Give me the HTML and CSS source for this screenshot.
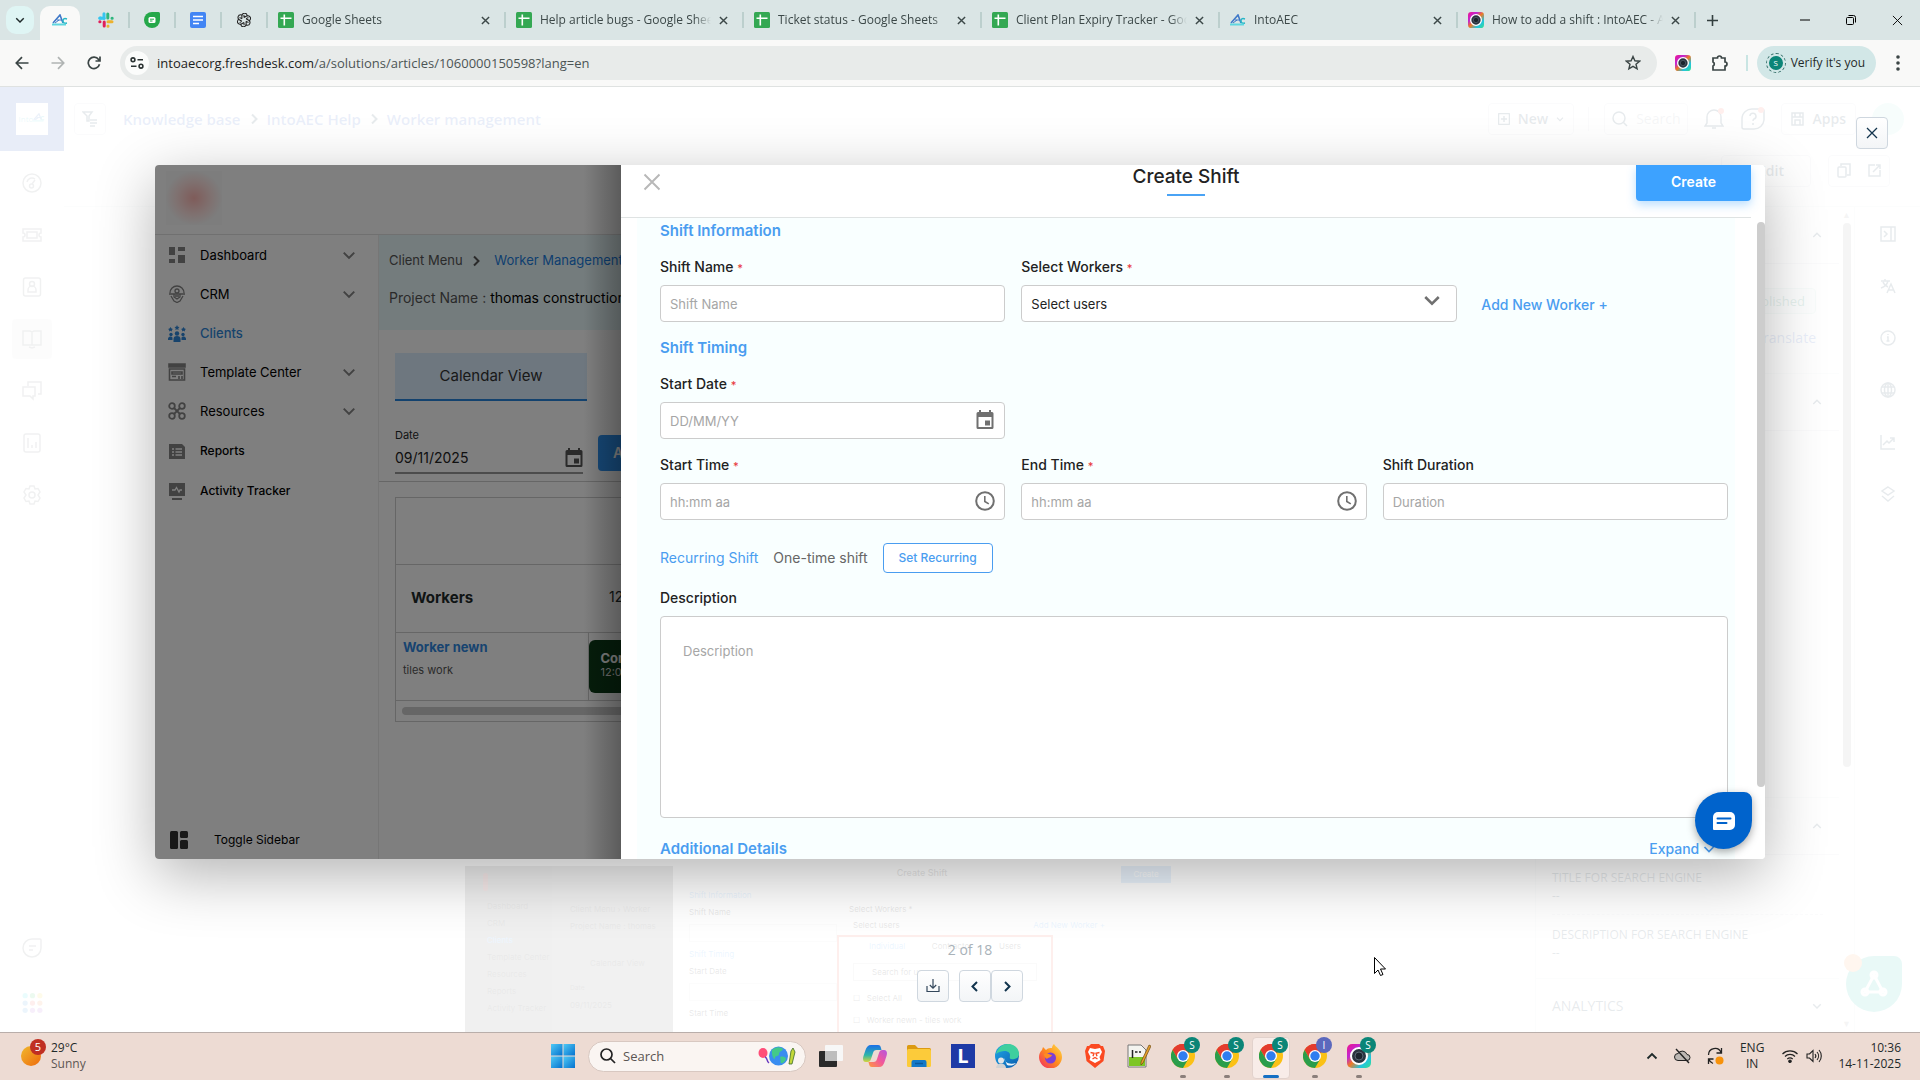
FILE: index.html
```html
<!DOCTYPE html>
<html lang="en">
<head>
<meta charset="utf-8">
<title>IntoAEC Help</title>
<link rel="stylesheet" href="styles.css">
</head>
<body>
<svg class="defs" aria-hidden="true">
  <symbol id="sheets" viewBox="0 0 16 16"><rect width="16" height="16" rx="1.5" fill="#34a853"/><path d="M2.5 6.2h11M6.3 2.5v11" stroke="#fff" stroke-width="1.6"/></symbol>
  <symbol id="x" viewBox="0 0 10 10"><path d="M1 1l8 8M9 1l-8 8" stroke="currentColor" stroke-width="1.6" fill="none"/></symbol>
  <symbol id="xthin" viewBox="0 0 12 12"><path d="M1 1l10 10M11 1L1 11" stroke="currentColor" stroke-width="1.3" fill="none"/></symbol>
  <symbol id="down" viewBox="0 0 12 12"><path d="M1.500 4L6 8.500 10.500 4" stroke="currentColor" stroke-width="1.700" fill="none"/></symbol>
  <symbol id="up" viewBox="0 0 12 12"><path d="M1.500 8.500L6 4l4.500 4.500" stroke="currentColor" stroke-width="1.800" fill="none"/></symbol>
  <symbol id="right" viewBox="0 0 12 12"><path d="M4 1.500L8.500 6 4 10.500" stroke="currentColor" stroke-width="2" fill="none"/></symbol>
  <symbol id="left" viewBox="0 0 12 12"><path d="M8 1.500L3.500 6 8 10.500" stroke="currentColor" stroke-width="2" fill="none"/></symbol>
  <symbol id="aec" viewBox="0 0 16 12"><path d="M1 9L8 1l3 8" fill="none" stroke="#3f78c8" stroke-width="1.600"/><path d="M3 9l4-3M5 6h5" stroke="#3f78c8"/><path d="M15 5c-3-1-4 0-4 2s1 2.500 4 2" fill="none" stroke="#27b6c6" stroke-width="1.500"/><path d="M0 10.500h14" stroke="#5fd6df" stroke-width="2"/></symbol>
  <symbol id="camera" viewBox="0 0 24 24"><rect width="24" height="24" rx="5" fill="url(#rainbow)"/><circle cx="12" cy="12" r="8" fill="#2b3440" stroke="#fff" stroke-width="2"/><circle cx="12" cy="12" r="4" fill="#1c242d" stroke="#5a6673"/></symbol>
  <linearGradient id="rainbow" x1="0" y1="0" x2="1" y2="1"><stop offset="0" stop-color="#f0148c"/><stop offset=".3" stop-color="#c026d3"/><stop offset=".5" stop-color="#ef7a24"/><stop offset=".75" stop-color="#22c4e0"/><stop offset="1" stop-color="#35e08a"/></linearGradient>
  <linearGradient id="win" x1="0" y1="0" x2="1" y2="1"><stop offset="0" stop-color="#4fc9f5"/><stop offset="1" stop-color="#0572cf"/></linearGradient>
  <linearGradient id="edge" x1="0" y1="0" x2="1" y2="1"><stop offset="0" stop-color="#1fa7e8"/><stop offset="1" stop-color="#0b5cae"/></linearGradient>
  <linearGradient id="fox" x1="1" y1="0" x2="0" y2="1"><stop offset="0" stop-color="#ffe04a"/><stop offset=".5" stop-color="#ff8a1e"/><stop offset="1" stop-color="#f0246a"/></linearGradient>
  <linearGradient id="cop1" x1="0" y1="0" x2="0" y2="1"><stop offset="0" stop-color="#1b6fe8"/><stop offset=".6" stop-color="#2fb6a8"/><stop offset="1" stop-color="#d6d43a"/></linearGradient>
  <linearGradient id="cop2" x1="1" y1="0" x2="0" y2="1"><stop offset="0" stop-color="#b455e0"/><stop offset=".5" stop-color="#f2589a"/><stop offset="1" stop-color="#ff9a3c"/></linearGradient>
  <symbol id="chrome" viewBox="0 0 24 24"><circle cx="12" cy="12" r="12" fill="#fbc116"/><path d="M12 12L1.600 6A12 12 0 0 1 22.400 6z" fill="#e33b2e"/><path d="M12 6h10.400A12 12 0 0 0 1.600 6l5.200 9z" fill="#e33b2e"/><path d="M1.600 6A12 12 0 0 0 12 24l5.200-9H6.800z" fill="#2a9d4b"/><circle cx="12" cy="12" r="6" fill="#fff"/><circle cx="12" cy="12" r="4.700" fill="#2f7df0"/></symbol>
  <symbol id="calendar" viewBox="0 0 18 20"><path d="M2 2h14a1.500 1.500 0 0 1 1.500 1.500v14A1.500 1.500 0 0 1 16 19H2a1.500 1.500 0 0 1-1.500-1.500v-14A1.500 1.500 0 0 1 2 2zm.5 5v10h13V7z" fill="currentColor" fill-rule="evenodd"/><path d="M4 0v3M14 0v3" stroke="currentColor" stroke-width="2"/><path d="M9 10.500h5v5H9z" fill="currentColor"/></symbol>
  <symbol id="clock" viewBox="0 0 20 20"><circle cx="10" cy="10" r="8.800" fill="none" stroke="currentColor" stroke-width="2"/><path d="M9.800 5v5.500l4 2.400" fill="none" stroke="currentColor" stroke-width="1.600"/></symbol>
</svg>

<header class="browser">
  <div class="tabstrip">
    <button class="tabsearch" aria-label="Search tabs"><svg width="10" height="10"><use href="#down"/></svg></button>
    <div class="tab-active"><svg width="16" height="12"><use href="#aec"/></svg></div>
    <div class="pin"><svg width="16" height="16" viewBox="0 0 16 16" stroke-width="3" stroke-linecap="round"><path d="M6 1.800v4.400M1.800 6h1" stroke="#36c5f0"/><path d="M2 6.200h4" stroke="#36c5f0"/><path d="M9.800 2v4M14.200 6.200h-.2" stroke="#2eb67d"/><path d="M10 9.800h4M10 14.200v-.2" stroke="#ecb22e"/><path d="M6.200 10v4M1.800 9.800H2" stroke="#e01e5a"/></svg></div>
    <div class="pin"><svg width="16" height="16" viewBox="0 0 16 16"><path d="M8 0h6.500A1.500 1.500 0 0 1 16 1.500V8a8 8 0 1 1-8-8z" fill="#25a84a"/><rect x="4.500" y="5" width="7" height="6" rx="1.500" fill="#fff"/><path d="M6 7.200h4M6 9h2.500" stroke="#25a84a"/></svg></div>
    <div class="pin"><svg width="16" height="16" viewBox="0 0 16 16"><rect width="16" height="16" rx="2" fill="#4285f4"/><path d="M3 4.500h10M3 8h10M3 11.500h6" stroke="#fff" stroke-width="1.600"/></svg></div>
    <div class="pin"><svg width="14" height="14" viewBox="0 0 16 16" fill="none" stroke="#222" stroke-width="1.200"><path id="petal" d="M8 5.200L11 3.500a3 3 0 0 1 4 4.200c-.3.600-.8 1-1.300 1.200M8 5.200v-2a3 3 0 0 0-.2-1"/><use href="#petal" transform="rotate(60 8 8)"/><use href="#petal" transform="rotate(120 8 8)"/><use href="#petal" transform="rotate(180 8 8)"/><use href="#petal" transform="rotate(240 8 8)"/><use href="#petal" transform="rotate(300 8 8)"/></svg></div>
    <div class="tab"><svg width="16" height="16"><use href="#sheets"/></svg><span class="title">Google Sheets</span><svg class="cls" width="9" height="9"><use href="#x"/></svg></div>
    <div class="tab"><svg width="16" height="16"><use href="#sheets"/></svg><span class="title">Help article bugs - Google Sheets</span><svg class="cls" width="9" height="9"><use href="#x"/></svg></div>
    <div class="tab"><svg width="16" height="16"><use href="#sheets"/></svg><span class="title">Ticket status - Google Sheets</span><svg class="cls" width="9" height="9"><use href="#x"/></svg></div>
    <div class="tab"><svg width="16" height="16"><use href="#sheets"/></svg><span class="title">Client Plan Expiry Tracker - Google Sheets</span><svg class="cls" width="9" height="9"><use href="#x"/></svg></div>
    <div class="tab"><svg width="16" height="12"><use href="#aec"/></svg><span class="title">IntoAEC</span><svg class="cls" width="9" height="9"><use href="#x"/></svg></div>
    <div class="tab"><svg width="16" height="16"><use href="#camera"/></svg><span class="title">How to add a shift : IntoAEC - Article</span><svg class="cls" width="9" height="9"><use href="#x"/></svg></div>
    <button class="newtab" aria-label="New tab"><svg width="11" height="11" viewBox="0 0 11 11"><path d="M5.500 0v11M0 5.500h11" stroke="#333f3f" stroke-width="1.600"/></svg></button>
    <div class="wincontrols">
      <button aria-label="Minimise"><svg width="10" height="10" viewBox="0 0 10 10"><path d="M0 5h10" stroke="#000"/></svg></button>
      <button aria-label="Restore"><svg width="10" height="10" viewBox="0 0 10 10" fill="none" stroke="#000"><rect x=".5" y="2.500" width="7" height="7" rx="1"/><path d="M2.500.5h5a2 2 0 0 1 2 2v5"/></svg></button>
      <button aria-label="Close window"><svg width="11" height="11" viewBox="0 0 12 12"><path d="M1 1l10 10M11 1L1 11" stroke="#000"/></svg></button>
    </div>
  </div>
  <div class="toolbar">
    <div class="nav">
      <button aria-label="Back"><svg width="14" height="14" viewBox="0 0 14 14" fill="none" stroke="#3b4545" stroke-width="1.700"><path d="M13.500 7H1.500M7 1.200L1.300 7 7 12.800"/></svg></button>
      <button aria-label="Forward"><svg width="14" height="14" viewBox="0 0 14 14" fill="none" stroke="#b0b4b3" stroke-width="1.700"><path d="M.5 7h12M7 1.200L12.700 7 7 12.800"/></svg></button>
      <button aria-label="Reload"><svg width="14" height="14" viewBox="0 0 14 14" fill="none" stroke="#3b4545" stroke-width="1.700"><path d="M12.500 8.300A5.700 5.700 0 1 1 11.600 3.500L13 5M13 .5V5H8.500"/></svg></button>
    </div>
    <div class="urlbar">
      <span class="site"><svg width="14" height="12" viewBox="0 0 14 12" fill="none" stroke="#2b3333" stroke-width="1.600"><circle cx="3" cy="2.800" r="1.900"/><path d="M7.500 2.800H13M1 9.200h5.500"/><circle cx="11" cy="9.200" r="1.900"/></svg></span>
      <span class="url">intoaecorg.freshdesk.com<i>/a/solutions/articles/1060000150598?lang=en</i></span>
      <svg width="16" height="16" viewBox="0 0 16 16"><path d="M8 1.500l1.900 4.300 4.700.4-3.600 3 1.100 4.600L8 11.300l-4.100 2.500L5 9.200l-3.600-3 4.700-.4z" fill="none" stroke="#3b4545" stroke-width="1.400"/></svg>
    </div>
    <svg width="16" height="16"><use href="#camera"/></svg>
    <svg class="puzzle" width="18" height="18" viewBox="0 0 18 18"><path d="M2 4h4.500a2 2 0 0 1 4 0H14v4a2 2 0 0 1 0 4v4H2v-4a2.200 2.200 0 0 0 0-4z" fill="none" stroke="#3b4545" stroke-width="1.700"/></svg>
    <span class="barsep"></span>
    <button class="verify"><span class="avatar">S</span>Verify it's you</button>
    <svg class="dots" width="4" height="16" viewBox="0 0 4 16" fill="#3b4545"><circle cx="2" cy="2" r="1.800"/><circle cx="2" cy="8" r="1.800"/><circle cx="2" cy="14" r="1.800"/></svg>
  </div>
</header>

<main class="page">
  <div class="app">
    <nav class="rail">
      <div class="brand"><span>Into<svg width="12" height="9"><use href="#aec"/></svg></span></div>
      <div class="railicons">
        <a href="#"><svg viewBox="0 0 20 20"><circle cx="10" cy="10" r="9"/><path d="M5 9a5 5 0 0 1 8-3M10 11l3-4"/><circle cx="9.500" cy="13" r="2"/></svg></a>
        <a href="#"><svg viewBox="0 0 20 20"><path d="M1 4h18v4a2 2 0 0 0 0 4v4H1v-4a2 2 0 0 0 0-4z"/><rect x="5" y="7" width="10" height="6"/></svg></a>
        <a href="#"><svg viewBox="0 0 20 20"><rect x="1.500" y="1" width="17" height="18" rx="2"/><circle cx="10" cy="7" r="2.500"/><path d="M6 15v-2a4 4 0 0 1 8 0v2z"/></svg></a>
        <a href="#" class="on"><svg viewBox="0 0 20 20"><path d="M10 3v13M1 2h7l2 1 2-1h7v14H1zM7 18l3 1 3-1"/></svg></a>
        <a href="#"><svg viewBox="0 0 20 20"><path d="M6 5V1h13v12h-3M1 6h12v9h-2v3l-3-3H1z"/></svg></a>
        <a href="#"><svg viewBox="0 0 20 20"><rect x="2" y="1" width="16" height="18" rx="2"/><path d="M6 5v10M10 12v3M14 9v6"/></svg></a>
        <a href="#"><svg viewBox="0 0 20 20"><path d="M8 1h4l1 3 3-.5 2 3.500-2 3 2 3-2 3.500-3-.5-1 3H8l-1-3-3 .5L2 13l2-3-2-3 2-3.500 3 .5z"/><circle cx="10" cy="10" r="3"/></svg></a>
      </div>
      <div class="railfoot">
        <a href="#"><svg viewBox="0 0 20 20"><path d="M10 1h8a1 1 0 0 1 1 1v8a9 9 0 1 1-9-9zM7 8h7M7 12h4"/></svg></a>
        <a href="#"><svg viewBox="0 0 20 20" stroke="none"><g fill="#2ce0e8"><circle cx="3" cy="3" r="2.500"/></g><circle cx="10" cy="3" r="2.500" fill="#3cc66b"/><circle cx="17" cy="3" r="2.500" fill="#f5d22e"/><circle cx="3" cy="10" r="2.500" fill="#3f9be0"/><circle cx="10" cy="10" r="2.500" fill="#ee5c50"/><circle cx="17" cy="10" r="2.500" fill="#f08040"/><circle cx="3" cy="17" r="2.500" fill="#3f9be0"/><circle cx="10" cy="17" r="2.500" fill="#b060d0"/><circle cx="17" cy="17" r="2.500" fill="#b060d0"/></svg></a>
      </div>
    </nav>
    <div class="appmain">
      <div class="topbar">
        <button class="box filter" aria-label="Filter"><svg width="16" height="16" viewBox="0 0 16 16"><path d="M1 1h9L7 5v5H5V5zM8 9h7M8 12h7M8 15h5"/></svg></button>
        <div class="crumbs"><a href="#">Knowledge base</a><svg width="12" height="12"><use href="#right"/></svg><a href="#">IntoAEC Help</a><svg width="12" height="12"><use href="#right"/></svg><a href="#">Worker management</a></div>
        <button class="box"><svg width="12" height="12" viewBox="0 0 12 12"><rect x=".5" y=".5" width="11" height="11" rx="1"/><path d="M6 3v6M3 6h6"/></svg>New<svg width="8" height="8"><use href="#down"/></svg></button>
        <span class="vline"></span>
        <button class="box search"><svg width="16" height="16" viewBox="0 0 16 16"><circle cx="7" cy="7" r="6"/><path d="M11.500 11.500L15 15"/></svg>Search</button>
        <svg class="bell" width="20" height="22" viewBox="0 0 20 22"><path d="M1 18h18l-2-3V9A7 7 0 0 0 3 9v6zM8 20h4"/><circle cx="17" cy="3" r="3" fill="#ff5a4a" stroke="none"/></svg>
        <svg class="help" width="24" height="24" viewBox="0 0 24 24"><path d="M12 2h9a2 2 0 0 1 2 2v9a10 10 0 0 1-10 9H3a2 2 0 0 1-2-2v-8A10 10 0 0 1 12 2zM9 9a3 3 0 1 1 4 3c-1 .5-1 1-1 2M12 16v2"/><circle cx="20" cy="3" r="3" fill="#ff5a4a" stroke="none"/></svg>
        <button class="box apps"><svg width="13" height="14" viewBox="0 0 13 14"><path d="M1 1h11v4H1zM1 5v8h11V5M4 1v4M9 1v4M4 8h5v5H4z"/></svg>Apps</button>
        <span class="user"></span>
      </div>
      <div class="actions"><button class="box edit">Edit</button><div class="pair"><svg width="14" height="15" viewBox="0 0 14 15"><rect x="1" y="4" width="8" height="10" rx="1"/><path d="M4 3V1h9v11h-3"/></svg><svg width="13" height="13" viewBox="0 0 13 13"><path d="M7 1H1v11h11V6M5 8l7-7M8 1h4v4"/></svg></div></div>
      <div class="appbody">
        <div class="article">
          <div class="shot">
            <div class="shotside"><i></i><span>Dashboard</span><span>CRM</span><span class="hl">Clients</span><span>Template Center</span><span>Resources</span><span>Reports</span><span>Activity Tracker</span></div>
            <div class="shotmid"><span>Client Menu › Worker</span><span>Project Name : thomas</span><b>Calendar View</b><small>Date</small><span>09/11/2025</span></div>
            <div class="shotform">
              <div class="shothead"><span></span><strong>Create Shift</strong><em>Create</em></div>
              <div class="shotcols">
                <div class="shotleft"><span class="hl">Shift Information</span><span>Shift Name</span><u></u><span class="hl">Shift Timing</span><span>Start Date</span><u></u><span>Start Time</span></div>
                <div class="shotright"><span>Select Workers *</span><div class="shotsel"><span>Select users</span><span class="hl">Add New Worker +</span></div>
                  <div class="shotpop"><div class="shottabs"><span class="hl">Individual</span><span>Contractor</span><span>Users</span></div><div class="shotsearch">Search for user</div><span>☐ &nbsp; Select All</span><span>☐ &nbsp; Worker newn - tiles work</span></div>
                </div>
              </div>
            </div>
          </div>
        </div>
        <aside class="panel">
          <div class="phead"><span></span><svg width="10" height="10"><use href="#up"/></svg></div>
          <div class="pstatus"><span class="badge">Published</span><a href="#">Translate</a></div>
          <div class="phead"><span></span><svg width="10" height="10"><use href="#up"/></svg></div>
          <div class="pblank"></div>
          <div class="phead"><span></span><svg width="10" height="10"><use href="#up"/></svg></div>
          <div class="pseo"><span>TITLE FOR SEARCH ENGINE</span><span>--</span><hr><span>DESCRIPTION FOR SEARCH ENGINE</span><span>--</span></div>
          <div class="phead last"><span>ANALYTICS</span><svg width="10" height="10"><use href="#down"/></svg></div>
        </aside>
        <div class="pscroll"><span>▲</span><i></i><span>▼</span></div>
        <div class="siderail">
          <svg viewBox="0 0 16 16"><rect x="1" y="1" width="14" height="14"/><path d="M11 1v14M4 5l3 3-3 3"/></svg>
          <svg viewBox="0 0 16 16"><path d="M1 3h9M5 1v2M8 3C7 7 4 9 1 10M3 4c1 3 3 4 5 5M7 15l4-9 4 9M8.500 12h5"/></svg>
          <svg viewBox="0 0 16 16"><circle cx="8" cy="8" r="7"/><path d="M7 7h1v4M6.500 11h3M8 4v1"/></svg>
          <svg viewBox="0 0 16 16"><circle cx="8" cy="8" r="7"/><ellipse cx="8" cy="8" rx="3.500" ry="7"/><path d="M2 5h12M2 11h12M8 1v14"/></svg>
          <svg viewBox="0 0 16 16"><path d="M1 1v14h14M3 11l4-4 2 2 5-5M10 4h4v4"/></svg>
          <svg viewBox="0 0 16 16"><path d="M8 1l6 4-6 4-6-4zM2 10l6 5 6-5"/></svg>
        </div>
      </div>
    </div>
    <div class="freddy"><i></i><svg width="28" height="28" viewBox="0 0 28 28" fill="#fff" stroke="#fff" stroke-width="2.500"><path d="M14 5L5 22h18z" fill="none"/><circle cx="14" cy="5" r="3"/><circle cx="5" cy="22" r="3"/><circle cx="23" cy="22" r="3"/></svg></div>
  </div>

  <div class="lightbox">
    <button class="lbclose" aria-label="Close"><svg width="12" height="12"><use href="#xthin"/></svg></button>
    <div class="slide">
      <section class="client">
        <div class="clienthead"><span class="blurlogo"></span></div>
        <div class="clientbody">
          <nav class="menu">
            <a href="#"><svg viewBox="0 0 18 18" fill="currentColor"><path d="M1 1h6v8H1zM10 1h7v4h-7zM1 13h6v4H1zM10 9h7v8h-7z"/></svg><span>Dashboard</span><svg class="chev"><use href="#down"/></svg></a>
            <a href="#"><svg viewBox="0 0 18 18" fill="none" stroke="currentColor" stroke-width="1.300"><path d="M2 8a7 7 0 0 1 14 0M1 9h16"/><circle cx="9" cy="6" r="2"/><path d="M3 11l3 5 3 1.500 3-1.500 3-5M6 9v3l3 2 3-2V9M7 11h4"/></svg><span>CRM</span><svg class="chev"><use href="#down"/></svg></a>
            <a href="#" class="cur"><svg viewBox="0 0 18 18" fill="currentColor"><circle cx="9" cy="9.500" r="2.200"/><circle cx="3" cy="10.500" r="1.700"/><circle cx="15" cy="10.500" r="1.700"/><path d="M5.500 18v-3a3.500 3 0 0 1 7 0v3zM0 16v-1.500a2.500 2.500 0 0 1 4.500-1V16zM18 16v-1.500a2.500 2.500 0 0 0-4.500-1V16zM9 1l.8 1.700 1.700.2-1.200 1.300.3 1.800L9 5.200 7.400 6l.3-1.800-1.200-1.300 1.700-.2zM2.500 3l1 1.500 1.500.5-1.200 1 .2 1.500-1.500-.7L1 7.500 1.200 6 0 5l1.500-.5zM15.500 3l1 1.500L18 5l-1.200 1 .2 1.500-1.500-.7-1.500.7.200-1.500L13 5l1.500-.5z"/></svg><span>Clients</span></a>
            <a href="#"><svg viewBox="0 0 18 18" fill="none" stroke="currentColor" stroke-width="1.600"><path d="M1 1h16v3H1z" fill="currentColor"/><path d="M1.500 6h15v11h-15zM4 9h10v2H4zM4 13.500h4M11 13v3M14 13v3"/></svg><span>Template Center</span><svg class="chev"><use href="#down"/></svg></a>
            <a href="#"><svg viewBox="0 0 18 18" fill="none" stroke="currentColor" stroke-width="1.800"><circle cx="4" cy="4" r="2.800"/><circle cx="14" cy="4" r="2.800"/><circle cx="4" cy="14" r="2.800"/><circle cx="14" cy="14" r="2.800"/><path d="M6 6l6 6M12 6l-6 6"/></svg><span>Resources</span><svg class="chev"><use href="#down"/></svg></a>
            <a href="#" class="leaf"><svg viewBox="0 0 18 18"><path d="M1 2h13l3 3v12H1z" fill="currentColor"/><path d="M4 7h2M7.500 7H14M4 10h2M7.500 10H14M4 13h2M7.500 13H14" stroke="#fff" stroke-width="1.300"/></svg><span>Reports</span></a>
            <a href="#" class="leaf"><svg viewBox="0 0 18 18"><path d="M1 1h16v13H1zM4 16h10v2H4z" fill="currentColor"/><path d="M4 8h3l1.500-2.500L11 10l1-2h2" stroke="#fff" stroke-width="1.300" fill="none"/></svg><span>Activity Tracker</span></a>
            <button class="toggle"><svg viewBox="0 0 18 18" fill="currentColor"><rect width="8" height="18" rx="1.500"/><rect x="10" width="8" height="7" rx="1.500"/><rect x="10" y="9" width="8" height="9" rx="1.500"/></svg><span>Toggle Sidebar</span></button>
          </nav>
          <div class="work">
            <div class="band">
              <p class="trail">Client Menu <svg width="12" height="12"><use href="#right"/></svg><a href="#">Worker Management</a></p>
              <p>Project Name : <b>thomas construction</b></p>
            </div>
            <div class="viewtab"><button>Calendar View</button></div>
            <div class="datebar">
              <div class="date"><label for="wdate">Date</label><div><input id="wdate" value="09/11/2025"><svg width="18" height="20"><use href="#calendar"/></svg></div></div>
              <button class="assign">Assign</button>
            </div>
            <div class="tablebox">
              <table>
                <colgroup><col class="who"><col></colgroup>
                <tr class="r1"><td colspan="2"></td></tr>
                <tr class="r2"><th>Workers</th><td class="time">12:00</td></tr>
                <tr class="r3"><td><a href="#">Worker newn</a><small>tiles work</small></td><td class="evt"><div><b>Construction</b><small>12:00</small></div></td></tr>
              </table>
              <div class="hbar"></div>
            </div>
          </div>
        </div>
        <div class="dim"></div>
      </section>

      <section class="drawer">
        <div class="dhead"><button class="dclose" aria-label="Close form"><svg width="18" height="18"><use href="#xthin"/></svg></button><h1>Create Shift</h1><button class="create">Create</button></div>
        <form class="form">
          <h2>Shift Information</h2>
          <div class="grid">
            <div class="field"><label for="name">Shift Name <i>*</i></label><input id="name" placeholder="Shift Name"></div>
            <div class="pick">
              <div class="field"><label for="users">Select Workers <i>*</i></label><div class="ctl"><select id="users"><option>Select users</option></select><svg class="caret"><use href="#down"/></svg></div></div>
              <a href="#">Add New Worker +</a>
            </div>
          </div>
          <h2 class="next">Shift Timing</h2>
          <div class="grid">
            <div class="field"><label for="sd">Start Date <i>*</i></label><div class="ctl"><input id="sd" placeholder="DD/MM/YY"><svg class="cal"><use href="#calendar"/></svg></div></div>
          </div>
          <div class="grid times">
            <div class="field"><label for="st">Start Time <i>*</i></label><div class="ctl"><input id="st" placeholder="hh:mm aa"><svg><use href="#clock"/></svg></div></div>
            <div class="field"><label for="et">End Time <i>*</i></label><div class="ctl"><input id="et" placeholder="hh:mm aa"><svg><use href="#clock"/></svg></div></div>
            <div class="field"><label for="du">Shift Duration</label><input id="du" placeholder="Duration"></div>
          </div>
          <div class="recur"><a href="#">Recurring Shift</a><span>One-time shift</span><button type="button">Set Recurring</button></div>
          <div class="field"><label for="desc">Description</label><textarea id="desc" placeholder="Description"></textarea></div>
          <div class="more"><h2>Additional Details</h2><a href="#">Expand <svg width="12" height="12"><use href="#down"/></svg></a></div>
        </form>
        <span class="vbar"></span>
        <button class="chat" aria-label="Chat"><svg width="22" height="18" viewBox="0 0 22 18"><path d="M5 0h12a5 5 0 0 1 5 5v8a5 5 0 0 1-5 5H1a1 1 0 0 1-1-1V5a5 5 0 0 1 5-5z" fill="#fff"/><path d="M4.500 6.500h13M4.500 11h9" stroke="#0063cc" stroke-width="2" stroke-linecap="round"/></svg></button>
      </section>
    </div>
    <div class="lbfoot">
      <p>2 of 18</p>
      <div><button aria-label="Download"><svg width="14" height="14" viewBox="0 0 14 14" fill="none" stroke="#33475b" stroke-width="1.200"><path d="M1 7v5.500h12V7M7 0v9M3.800 6L7 9.200 10.200 6"/></svg></button><span><button aria-label="Previous"><svg width="12" height="13"><use href="#left"/></svg></button><button aria-label="Next"><svg width="12" height="13"><use href="#right"/></svg></button></span></div>
    </div>
    <svg class="cursor" width="12" height="19" viewBox="0 0 12 19"><path d="M.5.5v16l3.500-3.500 2.500 5.500 2.500-1-2.500-5.500h5z" fill="#fff" stroke="#000"/></svg>
  </div>
</main>

<footer class="taskbar">
  <div class="weather"><span class="sun"><i>5</i></span><p>29°C<br><span>Sunny</span></p></div>
  <div class="dock">
    <button class="cell" aria-label="Start"><svg width="24" height="24" viewBox="0 0 24 24" fill="url(#win)"><rect width="11.500" height="11.500"/><rect x="12.500" width="11.500" height="11.500"/><rect y="12.500" width="11.500" height="11.500"/><rect x="12.500" y="12.500" width="11.500" height="11.500"/></svg></button>
    <div class="find"><svg width="16" height="16" viewBox="0 0 16 16" fill="none" stroke="#222" stroke-width="1.700"><circle cx="6.500" cy="6.500" r="5.500"/><path d="M10.500 10.500L15 15"/></svg><input aria-label="Search" placeholder="Search"><svg width="38" height="22" viewBox="0 0 38 22"><ellipse cx="5" cy="8" rx="4.500" ry="5" fill="#ff4d78"/><path d="M7 12c3 1 1 4 4 6" stroke="#6a3bc0" fill="none" stroke-width="1.500"/><circle cx="20.500" cy="11" r="9.500" fill="#3a8df0"/><path d="M14 5c4-4 9-3 11-1-1 3-4 2-4 5s-4 1-4 4-4-2-3-8zM22 12c3-1 6 0 6 2-1 3-4 5-5 4s0-3-1-6z" fill="#43c98a"/><path d="M31 19l2-13 2-3 2 4-3 12z" fill="#c3d83a" stroke="#3b6a28" stroke-width=".8"/></svg></div>
    <button class="cell" aria-label="Task view"><svg width="24" height="22" viewBox="0 0 24 22"><rect x="6" width="18" height="16" rx="1" fill="#f7f7f7"/><rect y="6" width="18" height="16" rx="1" fill="#2a2a2a"/><path d="M6 6h12v10H6z" fill="#bdbdbd"/></svg></button>
    <button class="cell" aria-label="Copilot"><svg width="24" height="22" viewBox="0 0 24 22"><path d="M8 0h7c2 0 2.500 1 3 3l.5 2h-5c-2 0-3 1-3.500 3l-2 6c-.6 2-1.500 3-3.500 3H3c-3 0-3.500-3-2.500-6l2-6C3.500 2 5 0 8 0z" fill="url(#cop1)"/><path d="M16 22H9c-2 0-2.500-1-3-3l-.5-2h5c2 0 3-1 3.500-3l2-6c.6-2 1.500-3 3.500-3H21c3 0 3.500 3 2.500 6l-2 6c-1 3-2.500 5-5.500 5z" fill="url(#cop2)"/></svg></button>
    <button class="cell" aria-label="Files"><svg width="24" height="22" viewBox="0 0 24 22"><path d="M0 1.500A1.500 1.500 0 0 1 1.500 0H8l3 3h11.500A1.500 1.500 0 0 1 24 4.500V8H0z" fill="#dc9a12"/><rect y="4" width="24" height="18" rx="1.500" fill="#fccb3a"/><path d="M4.500 22v-5a2 2 0 0 1 2-2h11a2 2 0 0 1 2 2v5z" fill="#1379c8"/><path d="M8 18.500h8" stroke="#0b5a9c" stroke-width="1.500"/></svg></button>
    <button class="cell" aria-label="L"><span class="lapp">L</span></button>
    <button class="cell" aria-label="Edge"><svg width="24" height="24" viewBox="0 0 24 24"><circle cx="12" cy="12" r="12" fill="url(#edge)"/><path d="M1 10C3 3 8 0 13 0c7 0 11 5 11 10 0 4-4 6-8 5-2-.7-1-2-1-4 0-4-7-6-14-1z" fill="#3fcf9e"/><path d="M9 14c0 4 5 7 12 5-3 3-6 3-9 2" fill="#eaf4fa"/><circle cx="6" cy="16.500" r="3" fill="#e4e4e4"/><path d="M1 24a5 4.500 0 0 1 10 0z" fill="#d2d2d2"/></svg></button>
    <button class="cell" aria-label="Firefox"><svg width="24" height="24" viewBox="0 0 24 24"><path d="M3 6l1-3 3 3c2-2 4-2 6-2 0-2 1-3 2-4 1 3 8 5 8 13a11.500 11.500 0 0 1-23 0c0-3 1-5 3-7z" fill="url(#fox)"/><circle cx="11.500" cy="14" r="5.500" fill="#7b3fd6"/><path d="M5 10c3-2 5 1 8 1-1 3-4 2-5 4-2-1-3-3-3-5z" fill="#ff8c22"/></svg></button>
    <button class="cell" aria-label="Brave"><svg width="20" height="24" viewBox="0 0 20 24"><path d="M6 0h8l2 2h2l2 5-1.500 10L10 24l-8.500-7L0 7l2-5h2z" fill="#fb4a22"/><path d="M5 4l5 1 5-1 2 4-2.500 5 1 3L10 19l-5.500-3 1-3L3 8z" fill="#fff"/><path d="M5.500 8.500l3.500.8-1 3M14.500 8.500l-3.500.8 1 3M7.500 15l2.500-1.500 2.500 1.500" fill="none" stroke="#fb4a22" stroke-width="1.400"/></svg></button>
    <button class="cell" aria-label="Notepad"><svg width="24" height="24" viewBox="0 0 24 24"><path d="M1 1h13l5 5v17H1z" fill="#f4f4f0" stroke="#777"/><path d="M2 13h16v9H2z" fill="#7dc625"/><path d="M5.500 6v8M8 8h2.500M12 8h2" stroke="#222" stroke-width="1.500"/><path d="M14 18L22 1l2 1-8 17-2 2z" fill="#e8a02c" stroke="#6b4a12" stroke-width=".7"/></svg></button>
    <button class="cell run" aria-label="Chrome"><svg width="24" height="24"><use href="#chrome"/></svg><i>S</i></button>
    <button class="cell run" aria-label="Chrome"><svg width="24" height="24"><use href="#chrome"/></svg><i>S</i></button>
    <button class="cell run active" aria-label="Chrome"><svg width="24" height="24"><use href="#chrome"/></svg><i>S</i></button>
    <button class="cell run alt" aria-label="Chrome"><svg width="24" height="24"><use href="#chrome"/></svg><i>I</i></button>
    <button class="cell run" aria-label="Recorder"><svg width="24" height="24"><use href="#camera"/></svg><i>S</i></button>
  </div>
  <div class="tray">
    <svg width="12" height="12"><use href="#up"/></svg>
    <svg width="17" height="16" viewBox="0 0 17 16" fill="none" stroke="#222"><path d="M4 12.500a3.500 3.500 0 0 1 0-7 5 5 0 0 1 9 1 3 3 0 0 1 0 6z" fill="#bdb8b4"/><path d="M2 1l13 14" stroke-width="1.400"/></svg>
    <svg width="17" height="18" viewBox="0 0 17 18" fill="none" stroke="#222" stroke-width="1.300"><path d="M1.500 8A6.500 6.500 0 0 1 14 5.500M14.500 1v5h-5M6 16.500A6.500 6.500 0 0 1 2 12.500M1.500 17v-5h5"/><circle cx="12.500" cy="13.500" r="4" fill="#f7920b" stroke="none"/></svg>
    <span class="lang">ENG<br>IN</span>
    <svg width="16" height="14" viewBox="0 0 16 14" fill="none" stroke="#222" stroke-width="1.200"><path d="M.5 5a10.500 10.500 0 0 1 15 0M3 7.500a7 7 0 0 1 10 0M5.300 10a4 4 0 0 1 5.400 0"/><circle cx="8" cy="12.200" r="1.200" fill="#222"/></svg>
    <svg width="16" height="14" viewBox="0 0 16 14" fill="none" stroke="#222" stroke-width="1.100"><path d="M1 5h2.500L7 1.500v11L3.500 9H1zM9 5a3 3 0 0 1 0 4M11 3a6 6 0 0 1 0 8M13 1a9 9 0 0 1 0 12"/></svg>
    <span class="when">10:36<br>14-11-2025</span>
  </div>
</footer>
</body>
</html>
```
FILE: styles.css
```css
* { box-sizing: border-box; }
body { margin: 0; height: 100vh; display: flex; flex-direction: column; overflow: hidden; font: 12px/16px "Open Sans", "Noto Sans", sans-serif; color: #1f2a2a; background: #fff; }
button, input, select, textarea { font: inherit; color: inherit; margin: 0; }
button { border: 0; background: none; padding: 0; display: flex; align-items: center; justify-content: center; }
a { text-decoration: none; color: inherit; }
p, h1, h2 { margin: 0; }
i, em { font-style: normal; }
svg { flex: none; }
.defs { position: absolute; width: 0; height: 0; }

/* browser frame */
.tabstrip { height: 40px; background: #dae5e5; display: flex; align-items: center; padding-left: 6px; }
.tabsearch { width: 28px; height: 28px; border-radius: 10px; background: #dff5f4; margin-right: 6px; }
.tab-active { align-self: flex-end; width: 40px; height: 34px; border-radius: 10px 10px 0 0; background: #f9f9f8; display: flex; align-items: center; justify-content: center; padding-bottom: 6px; margin-right: 4px; }
.pin { width: 46px; height: 16px; display: flex; align-items: center; justify-content: center; border-right: 2px solid #bccfcd; }
.pin:nth-child(3) { border-color: #bccfcd; }
.tab { width: 238px; height: 16px; display: flex; align-items: center; gap: 8px; padding: 0 14px 0 10px; border-right: 2px solid #bccfcd; color: #3c4848; min-width: 0; }
.tab .title { flex: 1; height: 20px; line-height: 20px; overflow: hidden; white-space: nowrap; -webkit-mask-image: linear-gradient(90deg, #000 90%, transparent); mask-image: linear-gradient(90deg, #000 90%, transparent); }
.cls { color: #3c4848; }
.newtab { width: 32px; height: 28px; }
.wincontrols { margin-left: auto; display: flex; }
.wincontrols button { width: 46px; height: 40px; }
.toolbar { height: 47px; display: flex; align-items: center; background: #f9f9f8; border-bottom: 1px solid #dfe2e1; padding-right: 20px; }
.nav { width: 120px; display: flex; padding-left: 4px; }
.nav button { width: 36px; height: 34px; }
.urlbar { flex: 1; height: 34px; border-radius: 17px; background: #e8ebea; display: flex; align-items: center; padding: 0 16px 0 5px; margin-right: 18px; font-size: 13px; }
.site { width: 24px; height: 24px; border-radius: 50%; background: #fbfcfb; display: flex; align-items: center; justify-content: center; }
.url { flex: 1; padding-left: 8px; color: #1c2222; }
.url i { color: #4c5555; }
.puzzle { margin: 0 17px 0 20px; }
.barsep { width: 2px; height: 16px; background: #c9e5e3; margin-right: 9px; }
.verify { height: 34px; border-radius: 17px; background: #d2e7e7; padding: 0 11px 0 10px; gap: 6px; white-space: nowrap; }
.avatar { width: 18px; height: 18px; border-radius: 50%; background: #0b8577; border: 2px solid #d2e7e7; outline: 1px dashed #36706a; color: #fff; font-size: 8px; line-height: 14px; }
.dots { margin-left: 20px; }

/* help desk behind the viewer */
.page { flex: 1; min-height: 0; position: relative; overflow: hidden; }
.app { height: 100%; display: grid; grid-template-columns: 64px 1fr; position: relative; color: #12344d; font-size: 14px; }
.app svg { fill: none; stroke: #12344d; stroke-width: 1.5; }
.rail { display: flex; flex-direction: column; align-items: center; }
.rail a { width: 40px; height: 40px; display: flex; align-items: center; justify-content: center; border-radius: 4px; }
.rail a svg { width: 20px; height: 20px; stroke: #6a6f75; }
.rail a.on { background: #e2e2e2; }
.brand { width: 64px; height: 64px; background: #194bb9; display: flex; align-items: center; justify-content: center; }
.brand span { width: 32px; height: 32px; background: #fff; font-size: 8px; line-height: 32px; text-align: center; color: #2cb4c4; white-space: nowrap; overflow: hidden; }
.railicons { display: flex; flex-direction: column; gap: 12px; padding-top: 12px; }
.railfoot { margin-top: auto; display: flex; flex-direction: column; gap: 15px; padding-bottom: 9px; }
.railfoot a:last-child svg { stroke: none; width: 21px; height: 24px; }
.appmain { display: flex; flex-direction: column; min-width: 0; min-height: 0; }
.topbar { height: 64px; display: flex; align-items: center; padding: 0 16px 0 10px; }
.box { height: 32px; border: 1px solid #d0d6dc; border-radius: 4px; padding: 0 9px; gap: 8px; font-weight: 600; }
.filter { width: 32px; padding: 0; margin-right: 17px; }
.crumbs { flex: 1; display: flex; align-items: center; gap: 7px; font-size: 15px; font-weight: 600; color: #2c5cc5; }
.crumbs svg { color: #12344d; }
.vline { width: 1px; height: 24px; background: #d0d6dc; margin: 0 15px 0 14px; }
.search { font-weight: 400; color: #9aa5ae; padding: 0 7px; }
.bell { margin: 0 17px 0 16px; }
.help { margin-right: 16px; }
.user { width: 32px; height: 32px; border-radius: 50%; background: #a8ece0; margin-left: 16px; }
.actions { height: 56px; border-bottom: 1px solid #e0e4e8; display: flex; justify-content: flex-end; align-items: center; padding: 0 30px 16px 0; gap: 17px; }
.edit { width: 90px; justify-content: flex-end; padding-right: 26px; }
.pair { display: flex; border: 1px solid #d0d6dc; border-radius: 4px; width: 62px; height: 32px; justify-content: space-around; align-items: center; }
.appbody { flex: 1; min-height: 0; display: flex; }
.article { flex: 1; display: flex; flex-direction: column; justify-content: flex-end; padding: 0 360px 0 401px; }
.panel { width: 304px; border-left: 1px solid #e0e4e8; display: flex; flex-direction: column; }
.phead { height: 57px; border-bottom: 1px solid #d0d6dc; padding: 0 17px 0 16px; display: flex; align-items: center; justify-content: space-between; font-size: 14px; }
.phead.last { height: 54px; border-bottom: 0; border-top: 1px solid #e0e4e8; }
.pstatus { height: 110px; border-bottom: 1px solid #e0e4e8; padding: 24px 23px; display: flex; flex-direction: column; align-items: flex-end; gap: 16px; }
.badge { border: 1px solid #b8e0d2; background: #e8f6f2; border-radius: 4px; padding: 3px 10px; color: #00795b; line-height: 18px; font-size: 13px; }
.pstatus a { color: #2c5cc5; }
.pblank { flex: 1; border-bottom: 1px solid #e0e4e8; }
.pseo { height: 123px; padding: 14px 16px; display: flex; flex-direction: column; line-height: 18px; font-size: 12px; }
.pseo hr { width: 100%; border: 0; border-top: 1px dashed #cfd7df; margin: 9px 0 11px; }
.pscroll { width: 15px; display: flex; flex-direction: column; align-items: center; font-size: 9px; color: #999; }
.pscroll i { width: 8px; height: 544px; border-radius: 4px; background: #999; margin-bottom: auto; }
.siderail { width: 66px; border-left: 1px solid #e0e4e8; display: flex; flex-direction: column; align-items: center; gap: 36px; padding-top: 19px; }
.siderail svg { width: 16px; height: 16px; }
.freddy { position: absolute; right: 18px; bottom: 20px; width: 56px; height: 56px; border-radius: 50% 8px 50% 50%; background: #22bfae; display: flex; align-items: center; justify-content: center; }
.freddy svg { stroke: #fff; stroke-width: 3; }
.freddy i { position: absolute; left: -2px; top: -2px; width: 18px; height: 18px; border-radius: 50%; background: #ffa05a; }
.shot { height: 166px; overflow: hidden; display: flex; font: 8px/10px Inter, sans-serif; color: #222; background: #fff; }
.hl { color: #3c9cf5; }
.shotside { width: 87px; background: #6a6a6a; display: flex; flex-direction: column; gap: 7px; padding: 7px 0 0 22px; }
.shotside i { width: 5px; height: 18px; margin-left: -4px; border-radius: 3px; background: #c04040; margin-bottom: 3px; }
.shotmid { width: 121px; background: #707070; display: flex; flex-direction: column; gap: 7px; padding: 38px 0 0 18px; white-space: nowrap; overflow: hidden; }
.shotmid b { font-weight: 400; text-align: center; padding: 20px 8px 8px 0; }
.shotform { flex: 1; }
.shothead { display: flex; justify-content: space-between; line-height: 14px; padding-right: 4px; height: 24px; }
.shothead strong { font-size: 9px; font-weight: 500; padding-left: 50px; }
.shothead em { width: 50px; height: 17px; line-height: 17px; background: #3c9cf5; color: #fff; text-align: center; }
.shotcols { display: flex; }
.shotleft { width: 164px; padding-left: 16px; display: flex; flex-direction: column; gap: 7px; }
.shotleft u { height: 18px; border: 1px solid #ddd; }
.shotright { flex: 1; padding-top: 14px; }
.shotright > span { padding-left: 12px; }
.shotsel { display: flex; justify-content: space-between; padding: 6px 70px 5px 16px; }
.shotpop { width: 216px; height: 110px; border: 2px solid #f06048; padding: 4px 14px; display: flex; flex-direction: column; gap: 12px; }
.shottabs { display: flex; justify-content: space-between; padding: 0 16px; }
.shotsearch { border: 1px solid #ccc; padding: 3px 18px; }

/* picture viewer */
.lightbox { position: absolute; inset: 0; background: rgba(255,255,255,.9); display: flex; flex-direction: column; padding: 78px 155px 0; }
.lbclose, .lbfoot button { width: 32px; height: 32px; border: 1px solid #cfd7df; border-radius: 4px; background: linear-gradient(#fff, #f3f5f7); color: #12344d; }
.lbclose { position: absolute; top: 30px; right: 32px; }
.slide { flex: 1; min-height: 0; display: flex; border-radius: 4px; overflow: hidden; background: #fff; box-shadow: 0 16px 60px rgba(0,0,0,.3); font: 14px/20px Inter, "Open Sans", sans-serif; }
.lbfoot { height: 173px; padding: 81px 0 0 20px; flex: none; display: flex; flex-direction: column; align-items: center; color: #a9b2b9; font-size: 14px; line-height: 20px; }
.lbfoot p { margin-bottom: 10px; }
.lbfoot div, .lbfoot span { display: flex; }
.lbfoot div { gap: 10px; }
.cursor { position: absolute; left: 1374px; top: 870px; }

.client { width: 466px; flex: none; position: relative; overflow: hidden; display: flex; flex-direction: column; background: #fff; }
.clienthead { height: 70px; flex: none; border-bottom: 1px solid #e0e0e0; padding: 6px 11px; }
.blurlogo { display: block; width: 56px; height: 54px; background: radial-gradient(closest-side, #ffb8b4, #ffe2e0 60%, #fafafa); }
.clientbody { flex: 1; min-height: 0; display: flex; }
.menu { width: 224px; flex: none; display: flex; flex-direction: column; border-right: 1px solid #ececec; color: #000; font-size: 13px; }
.menu a, .toggle { height: 39px; display: flex; align-items: center; gap: 14px; padding: 0 22px 0 13px; }
.menu a svg, .toggle svg { width: 18px; height: 18px; color: #848484; }
.menu a span { flex: 1; }
.menu a .chev { width: 14px; height: 14px; }
.menu a.cur, .menu a.cur svg { color: #2f87d8; font-weight: 500; }
.menu a.leaf { height: 40px; font-size: 12px; font-weight: 500; }
.menu a.leaf:not(.leaf + .leaf) { margin-top: 1px; }
.toggle { margin-top: auto; justify-content: flex-start; padding-left: 15px; gap: 26px; font-size: 12px; }
.toggle svg { color: #333; }
.work { flex: 1; min-width: 0; overflow: hidden; }
.band { height: 95px; background: #e9f8fa; padding: 6px 10px; white-space: nowrap; color: #555; }
.band p { height: 38px; line-height: 38px; }
.band .trail { font-size: 13px; }
.band svg { vertical-align: -2px; margin: 0 12px 0 4px; }
.band a { color: #1c7ee0; }
.band b { font-weight: 400; color: #000; }
.viewtab { padding: 23px 16px 0; }
.viewtab button { width: 192px; height: 48px; background: #dceeff; border-bottom: 2px solid #2684dc; font-size: 15px; color: #333; }
.datebar { display: flex; gap: 15px; padding: 26px 0 0 16px; height: 81px; border-bottom: 1px solid #ccc; }
.date { width: 188px; flex: none; }
.date label { display: block; font-size: 11px; line-height: 16px; }
.date div { display: flex; height: 31px; align-items: center; border-bottom: 2px solid #999; color: #555; }
.date input { flex: 1; min-width: 0; border: 0; background: none; padding: 0; color: #222; }
.assign { width: 100px; height: 36px; flex: none; margin-top: 8px; background: #2d90ee; color: #fff; border-radius: 4px; font-weight: 600; justify-content: flex-start; padding-left: 15px; }
.tablebox { width: 500px; margin: 15px 0 0 16px; border: 1px solid #ccc; }
.tablebox table { width: 100%; border-collapse: collapse; table-layout: fixed; }
.who { width: 192px; }
.tablebox td, .tablebox th { padding: 0; text-align: left; vertical-align: top; border-bottom: 1px solid #ccc; }
.r1 { height: 66px; }
.r2 { height: 68px; }
.r3 { height: 68px; }
.tablebox .r2 th { padding-left: 15px; font-size: 15px; vertical-align: middle; }
.tablebox .r2 td { padding: 22px 0 0 21px; }
.r3 a { display: block; padding: 4px 0 0 7px; font-size: 13px; font-weight: 700; color: #2f87e0; }
.r3 small { display: block; padding: 3px 0 0 7px; font-size: 11px; color: #555; }
.tablebox .evt { border-left: 1px solid #ccc; padding-top: 7px; }
.evt div { height: 53px; background: #0a3a16; border-radius: 6px; color: #fff; padding: 10px 12px; font-size: 13px; line-height: 16px; }
.evt div small { padding: 0; line-height: 12px; color: #ddd; }
.hbar { height: 8px; margin: 6px 0 6px 6px; border-radius: 4px; background: #ccc; }
.dim { position: absolute; inset: 0; background: linear-gradient(90deg, transparent 92%, rgba(0,0,0,.28)), rgba(0,0,0,.5); }

.drawer { flex: 1; min-width: 0; position: relative; overflow: hidden; background: #fff; padding-right: 14px; color: #222; }
.dhead { height: 53px; border-bottom: 1px solid #dfe3e3; display: grid; grid-template-columns: 1fr auto 1fr; align-items: start; }
.dclose { width: 18px; height: 18px; margin: 8px 0 0 22px; color: #b8b8b8; }
.dhead h1 { font-size: 19px; line-height: 24px; font-weight: 500; text-align: center; }
.dhead h1::after { content: ""; display: block; width: 38px; height: 2px; margin: 5px auto 0; background: #4aa3f5; }
.create { justify-self: end; width: 115px; height: 36px; padding-bottom: 2px; border-radius: 0 0 4px 4px; background: #3da2ff; color: #fff; font-weight: 600; box-shadow: 0 4px 10px rgba(61,162,255,.35); }
.form { margin: 0 16px; padding: 3px 7px 0 23px; height: 660px; background: #f9ffff; font-size: 14px; }
.form h2 { font-size: 15px; line-height: 20px; font-weight: 600; color: #4a9df0; margin-bottom: 16px; }
.form h2.next { margin-top: 16px; }
.form a { color: #4a9df0; }
.grid { display: grid; grid-template-columns: repeat(3, 1fr); gap: 16px; }
.times { margin-top: 16px; }
.field label { display: block; height: 20px; line-height: 20px; margin-bottom: 8px; font-weight: 500; }
.field label i { color: #e8383d; font-size: 11px; line-height: 11px; }
.field input, .field select, .field textarea { display: block; width: 100%; height: 37px; border: 1px solid #ccc; border-radius: 4px; background: #fff; padding: 0 9px; outline: 0; appearance: none; font-size: 13px; }
.field ::placeholder { color: #a6a6a6; opacity: 1; }
.ctl { position: relative; }
.ctl svg { position: absolute; right: 10px; top: 8px; width: 20px; height: 20px; color: #707070; }
.ctl .caret { width: 18px; height: 18px; right: 16px; top: 6px; }
.pick { grid-column: span 2; display: flex; gap: 24px; align-items: flex-end; }
.pick .field { width: 436px; }
.pick > a { font-weight: 500; line-height: 34px; }
.recur { display: flex; align-items: center; gap: 15px; margin: 23px 0 15px; color: #666; }
.recur button { width: 110px; height: 30px; border: 1px solid #4a9df0; border-radius: 4px; background: #fff; color: #4a9df0; font-size: 12px; font-weight: 500; }
.field textarea { height: 202px; padding: 24px 22px; resize: none; }
.more { display: flex; justify-content: space-between; margin-top: 21px; padding-right: 13px; font-weight: 500; }
.more svg { vertical-align: -1px; }
.vbar { position: absolute; right: 0; top: 57px; width: 8px; height: 565px; border-radius: 4px; background: #cdcdcd; }
.chat { position: absolute; right: 13px; bottom: 10px; width: 57px; height: 57px; border-radius: 50% 8px 50% 50%; background: #0063cc; box-shadow: 0 3px 8px rgba(0,0,0,.35); }

/* taskbar */
.taskbar { height: 48px; flex: none; background: #eddbd3; border-top: 1px solid #b9aeaa; display: grid; grid-template-columns: 1fr auto 1fr; align-items: center; padding-bottom: 1px; }
.weather { display: flex; align-items: center; gap: 10px; padding-left: 21px; }
.weather p span { color: #5c5653; }
.sun { position: relative; width: 20px; height: 20px; border-radius: 50%; background: linear-gradient(135deg, #f0b92e, #ee6a0c); }
.sun i { position: absolute; left: 9px; top: -7px; width: 16px; height: 16px; border-radius: 50%; background: #c02f22; color: #fff; font-size: 11px; line-height: 16px; text-align: center; }
.dock { display: flex; align-items: center; padding-left: 2px; }
.cell { width: 44px; height: 46px; position: relative; }
.find { width: 218px; height: 31px; margin: 0 3px; border-radius: 16px; background: #faf5f2; border: 1px solid #d8c8c1; display: flex; align-items: center; padding: 0 9px 0 11px; }
.find input { flex: 1; min-width: 0; border: 0; background: none; padding: 0 0 0 7px; font-size: 13px; outline: 0; }
.find ::placeholder { color: #5a5553; opacity: 1; }
.lapp { width: 24px; height: 24px; background: #1e3aa6; color: #fff; font: 700 20px/24px "Open Sans", sans-serif; }
.run i { position: absolute; right: 5px; top: 4px; width: 16px; height: 16px; border-radius: 50%; background: #0b8577; color: #fff; font-size: 10px; line-height: 16px; }
.run.alt i { background: #5b68bd; }
.run::after { content: ""; position: absolute; bottom: 1px; width: 6px; height: 3px; border-radius: 2px; background: #8b7f7b; }
.run.active::before { content: ""; position: absolute; inset: 4px 3px 0; border-radius: 4px; background: #f8ece8; border: 1px solid #e2d2cc; }
.run.active svg { position: relative; }
.run.active::after { width: 16px; background: #1670c4; }
.tray { display: flex; align-items: center; justify-content: flex-end; gap: 16px; padding-right: 19px; }
.tray .lang { text-align: center; margin-right: 2px; }
.tray .when { text-align: right; }
.tray svg:nth-of-type(5) { margin-left: -8px; }
```
